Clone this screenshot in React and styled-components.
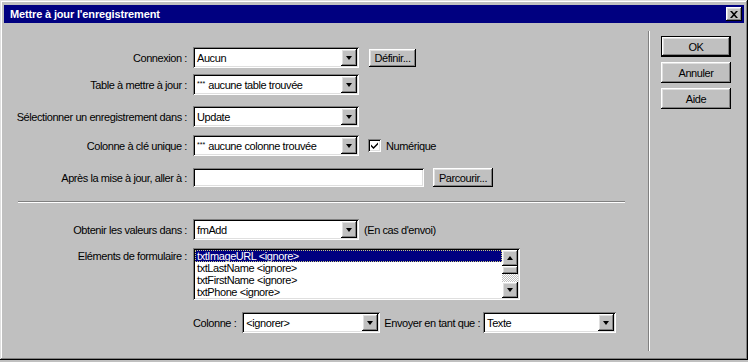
import React from 'react';
import styled, { createGlobalStyle } from 'styled-components';

const GlobalStyle = createGlobalStyle`
  html, body {
    margin: 0;
    padding: 0;
    background: #c0c0c0;
  }
  * {
    box-sizing: border-box;
  }
`;

const sunken = `
  box-shadow: inset 1px 1px #808080, inset -1px -1px #ffffff,
    inset 2px 2px #000000, inset -2px -2px #dfdfdf;
`;

const raised = `
  box-shadow: inset -1px -1px #000000, inset 1px 1px #ffffff,
    inset -2px -2px #808080, inset 2px 2px #dfdfdf;
`;

const Window = styled.div`
  width: 748px;
  height: 360px;
  background: #c0c0c0;
  padding: 4px;
  display: flex;
  flex-direction: column;
  font-family: 'Liberation Sans', Arial, sans-serif;
  font-size: 11px;
  letter-spacing: -0.42px;
  color: #000;
  box-shadow: inset -1px -1px #000000, inset 1px 1px #dfdfdf,
    inset -2px -2px #808080, inset 2px 2px #ffffff;
`;

const TitleBar = styled.div`
  height: 18px;
  margin-top: 1px;
  background: #000080;
  color: #fff;
  display: flex;
  align-items: center;
  justify-content: space-between;
  padding: 0 2px 0 6px;
  font-weight: 700;
  letter-spacing: -0.15px;
`;

const CloseButton = styled.div`
  width: 16px;
  height: 14px;
  background: #c0c0c0;
  display: flex;
  align-items: center;
  justify-content: center;
  ${raised}
`;

const Body = styled.div`
  flex: 1;
  display: flex;
`;

const FormPane = styled.div`
  flex: 1;
  display: flex;
  flex-direction: column;
`;

const Row = styled.div`
  display: flex;
  align-items: center;
  height: ${p => p.$h || 21}px;
  margin-top: ${p => p.$mt}px;
`;

const Label = styled.div`
  width: 183px;
  text-align: right;
  white-space: nowrap;
  margin-right: 6px;
  align-self: ${p => (p.$top ? 'flex-start' : 'center')};
  padding-top: ${p => (p.$top ? 2 : 0)}px;
`;

const Fields = styled.div`
  display: flex;
  align-items: center;
`;

const Inline = styled.span`
  white-space: nowrap;
  margin-left: ${p => p.$ml || 0}px;
`;

const SelectBox = styled.div`
  width: ${p => p.$w}px;
  height: 21px;
  background: #fff;
  padding: 2px;
  display: flex;
  align-items: center;
  margin-left: ${p => p.$ml || 0}px;
  ${sunken}
`;

const SelectText = styled.div`
  flex: 1;
  padding-left: 2px;
  white-space: nowrap;
  overflow: hidden;
`;

const Stars = styled.span`
  font-size: 7px;
  vertical-align: 3px;
  letter-spacing: 0;
  margin-right: 3px;
`;

const ArrowButton = styled.div`
  width: 16px;
  height: ${p => p.$h || 17}px;
  background: #c0c0c0;
  display: flex;
  align-items: center;
  justify-content: center;
  flex-shrink: 0;
  ${raised}
`;

const Arrow = styled.span`
  width: 0;
  height: 0;
  border-left: 3.5px solid transparent;
  border-right: 3.5px solid transparent;
  ${p => (p.$up ? 'border-bottom: 4px solid #000;' : 'border-top: 4px solid #000;')}
`;

const TextInput = styled.div`
  width: ${p => p.$w}px;
  height: 19px;
  background: #fff;
  ${sunken}
`;

const Button = styled.div`
  width: ${p => p.$w}px;
  height: ${p => p.$h || 19}px;
  margin-left: ${p => p.$ml || 0}px;
  background: #c0c0c0;
  display: flex;
  align-items: center;
  justify-content: center;
  white-space: nowrap;
  ${p =>
    p.$default
      ? `box-shadow: inset 0 0 0 1px #000, inset -2px -2px #000000, inset 2px 2px #ffffff,
    inset -3px -3px #808080, inset 3px 3px #dfdfdf;`
      : raised}
`;

const CheckBox = styled.div`
  width: 13px;
  height: 13px;
  background: #fff;
  margin-left: 9px;
  display: flex;
  align-items: center;
  justify-content: center;
  ${sunken}
`;

const HSeparator = styled.div`
  height: 2px;
  margin: 13px 23px 0 14px;
  border-top: 1px solid #808080;
  border-bottom: 1px solid #ffffff;
`;

const ListBox = styled.div`
  width: 327px;
  height: 52px;
  background: #fff;
  padding: 2px;
  display: flex;
  ${sunken}
`;

const ListItems = styled.div`
  flex: 1;
  display: flex;
  flex-direction: column;
`;

const ListItem = styled.div`
  height: 12px;
  line-height: 12px;
  padding-left: 2px;
  white-space: nowrap;
  background: ${p => (p.$selected ? '#000080' : 'transparent')};
  color: ${p => (p.$selected ? '#fff' : '#000')};
  outline: ${p => (p.$selected ? '1px dotted #c8c880' : 'none')};
  outline-offset: -1px;
`;

const ScrollBar = styled.div`
  width: 16px;
  display: flex;
  flex-direction: column;
`;

const ScrollThumb = styled.div`
  height: 8px;
  background: #c0c0c0;
  ${raised}
`;

const ScrollTrack = styled.div`
  flex: 1;
  background: repeating-conic-gradient(#c0c0c0 0 25%, #ffffff 0 50%) 0 0 / 2px 2px;
`;

const VSeparator = styled.div`
  width: 2px;
  margin: 8px 0 5px;
  border-left: 1px solid #808080;
  border-right: 1px solid #ffffff;
`;

const ButtonColumn = styled.div`
  width: 94px;
  padding: 13px 0 0 11px;
  display: flex;
  flex-direction: column;
  gap: 5px;
`;

function Select({ w, ml, children }) {
  return (
    <SelectBox $w={w} $ml={ml}>
      <SelectText>{children}</SelectText>
      <ArrowButton>
        <Arrow />
      </ArrowButton>
    </SelectBox>
  );
}

const items = [
  'txtImageURL <ignore>',
  'txtLastName <ignore>',
  'txtFirstName <ignore>',
  'txtPhone <ignore>',
];

function App() {
  return (
    <>
      <GlobalStyle />
      <Window>
        <TitleBar>
          Mettre à jour l'enregistrement
          <CloseButton>
            <svg width="8" height="7" viewBox="0 0 8 7">
              <path d="M0 0h2l2 2.2L6 0h2L5 3.5 8 7H6L4 4.8 2 7H0l3-3.5z" fill="#000" />
            </svg>
          </CloseButton>
        </TitleBar>
        <Body>
          <FormPane>
            <Row $mt={24}>
              <Label>Connexion :</Label>
              <Fields>
                <Select w={166}>Aucun</Select>
                <Button $w={47} $h={18} $ml={10}>Définir...</Button>
              </Fields>
            </Row>
            <Row $mt={6}>
              <Label>Table à mettre à jour :</Label>
              <Select w={166}>
                <Stars>***</Stars>aucune table trouvée
              </Select>
            </Row>
            <Row $mt={11}>
              <Label>Sélectionner un enregistrement dans :</Label>
              <Select w={166}>Update</Select>
            </Row>
            <Row $mt={8}>
              <Label>Colonne à clé unique :</Label>
              <Fields>
                <Select w={166}>
                  <Stars>***</Stars>aucune colonne trouvée
                </Select>
                <CheckBox>
                  <svg width="7" height="7" viewBox="0 0 7 7">
                    <path d="M0 2.5 2.5 5 7 0.5V2.5L2.5 7 0 4.5z" fill="#000" />
                  </svg>
                </CheckBox>
                <Inline $ml={5}>Numérique</Inline>
              </Fields>
            </Row>
            <Row $mt={11}>
              <Label>Après la mise à jour, aller à :</Label>
              <Fields>
                <TextInput $w={231} />
                <Button $w={60} $ml={9}>Parcourir...</Button>
              </Fields>
            </Row>
            <HSeparator />
            <Row $mt={16}>
              <Label>Obtenir les valeurs dans :</Label>
              <Fields>
                <Select w={166}>fmAdd</Select>
                <Inline $ml={5}>(En cas d'envoi)</Inline>
              </Fields>
            </Row>
            <Row $mt={8} $h={52}>
              <Label $top>Eléments de formulaire :</Label>
              <ListBox>
                <ListItems>
                  {items.map((item, i) => (
                    <ListItem key={item} $selected={i === 0}>
                      {item}
                    </ListItem>
                  ))}
                </ListItems>
                <ScrollBar>
                  <ArrowButton $h={16}>
                    <Arrow $up />
                  </ArrowButton>
                  <ScrollThumb />
                  <ScrollTrack />
                  <ArrowButton $h={16}>
                    <Arrow />
                  </ArrowButton>
                </ScrollBar>
              </ListBox>
            </Row>
            <Row $mt={12}>
              <Label />
              <Fields>
                <Inline>Colonne :</Inline>
                <Select w={138} ml={6}>&lt;ignorer&gt;</Select>
                <Inline $ml={4}>Envoyer en tant que :</Inline>
                <Select w={133} ml={3}>Texte</Select>
              </Fields>
            </Row>
          </FormPane>
          <VSeparator />
          <ButtonColumn>
            <Button $w={70} $h={21} $default>OK</Button>
            <Button $w={70} $h={21}>Annuler</Button>
            <Button $w={70} $h={21}>Aide</Button>
          </ButtonColumn>
        </Body>
      </Window>
    </>
  );
}

export default App;
